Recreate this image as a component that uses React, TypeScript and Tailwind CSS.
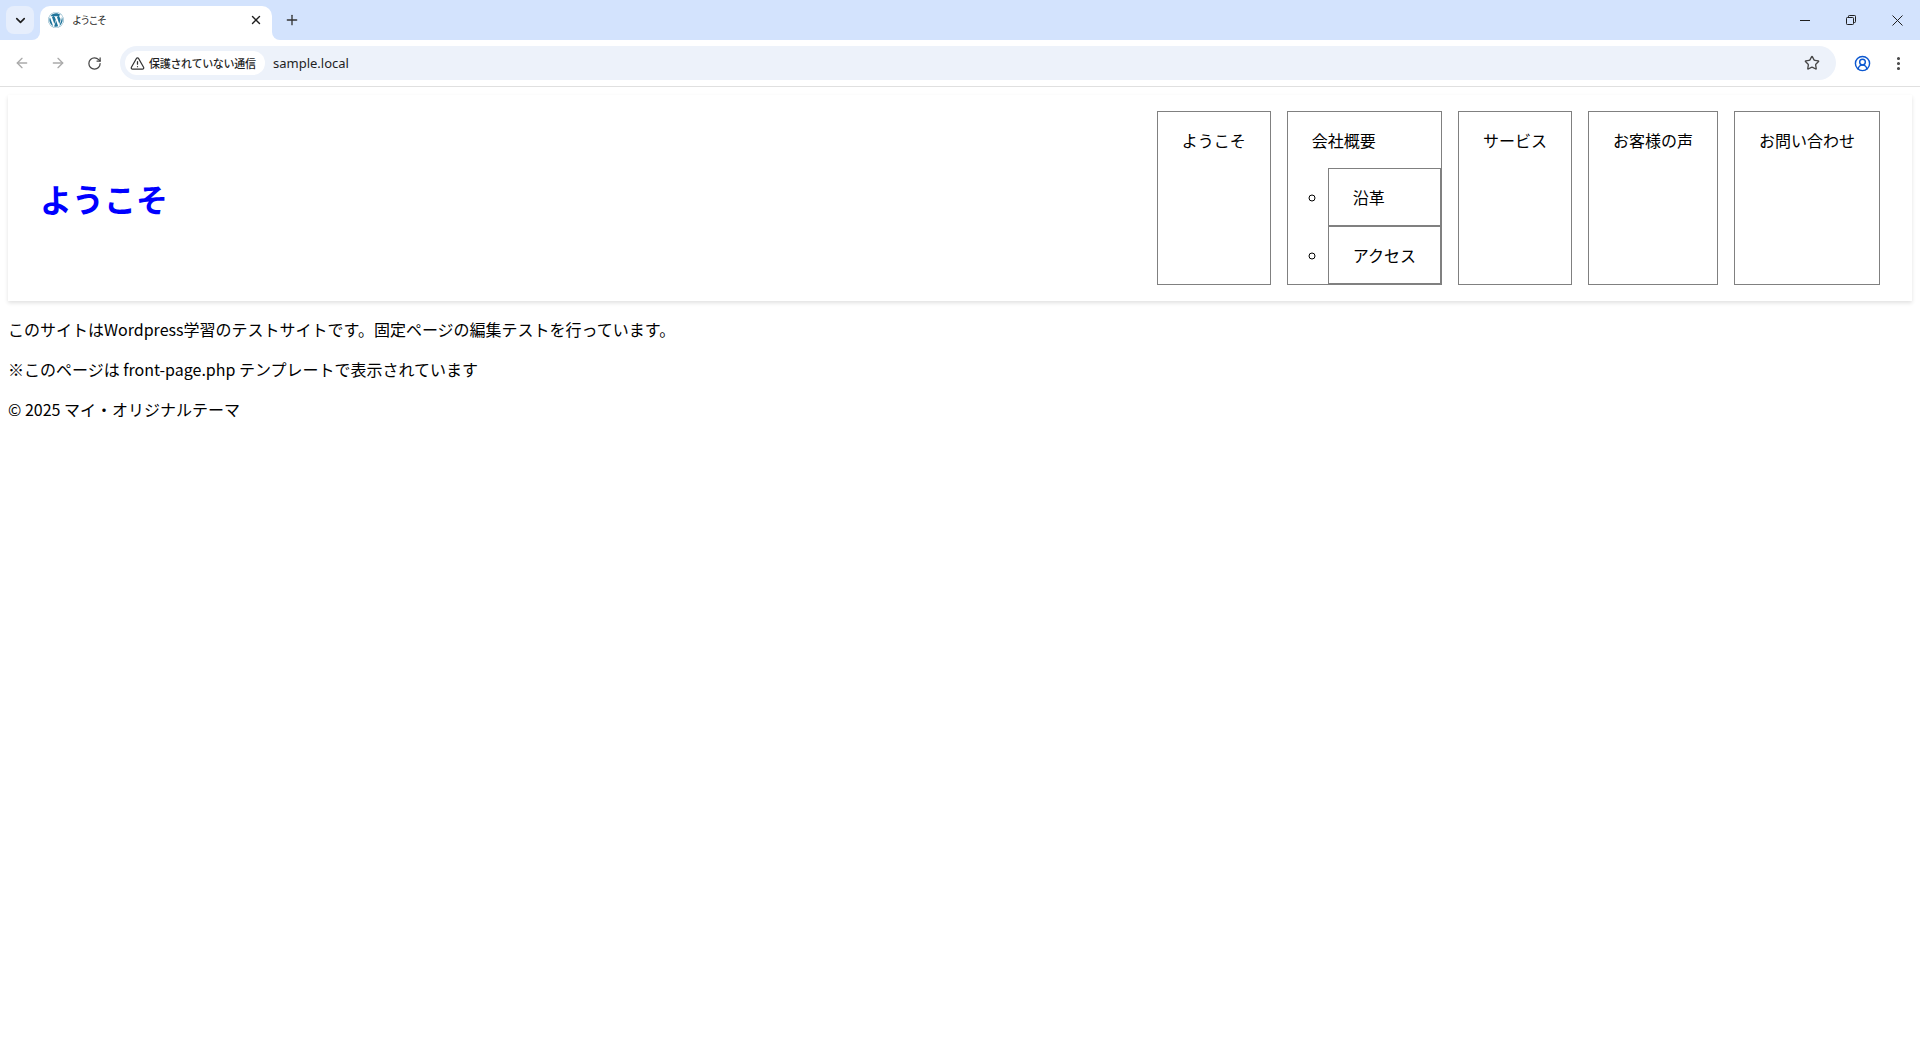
import { FaWordpress } from "react-icons/fa";
import { ArrowLeft, ArrowRight, RotateCw, Star, TriangleAlert, X, Plus, ChevronDown, CircleUserRound, EllipsisVertical } from "lucide-react";

function Chrome() {
  return (
    <div className="font-['Noto_Sans_CJK_JP','Noto_Sans',sans-serif] text-[#1f1f1f]">
      <div className="h-[40px] bg-[#d3e3fd] flex items-end pl-[6px] relative">
        <div className="w-[28px] h-[28px] mb-[6px] rounded-[8px] bg-[#e6eefc] flex items-center justify-center">
          <ChevronDown size={15} strokeWidth={2.6} />
        </div>
        <div className="relative ml-[6px] w-[232px] h-[34px] bg-white rounded-t-[10px] flex items-center pl-[8px] pr-[9px] pb-[6px]">
          <div className="absolute -left-[8px] bottom-0 w-[8px] h-[8px] bg-white">
            <div className="w-full h-full bg-[#d3e3fd] rounded-br-[8px]" />
          </div>
          <div className="absolute -right-[8px] bottom-0 w-[8px] h-[8px] bg-white">
            <div className="w-full h-full bg-[#d3e3fd] rounded-bl-[8px]" />
          </div>
          <FaWordpress size={16} className="text-[#21759b] shrink-0" />
          <span className="ml-[8px] text-[10px] tracking-[-1.7px] leading-none flex-1">ようこそ</span>
          <X size={14} strokeWidth={2.4} />
        </div>
        <div className="w-[28px] h-[28px] mb-[6px] ml-[6px] flex items-center justify-center">
          <Plus size={16} strokeWidth={2} className="text-[#333]" />
        </div>
        <div className="ml-auto flex items-center h-full">
          <div className="w-[46px] h-full flex items-center justify-center">
            <svg width="10" height="10" viewBox="0 0 10 10" fill="none" stroke="#1f1f1f" strokeWidth="1">
              <path d="M0 5.5H10" />
            </svg>
          </div>
          <div className="w-[46px] h-full flex items-center justify-center">
            <svg width="10" height="10" viewBox="0 0 10 10" fill="none" stroke="#1f1f1f" strokeWidth="1">
              <rect x="0.5" y="2.5" width="7" height="7" rx="0.8" />
              <path d="M2.5 2.5V1.3a.8.8 0 0 1 .8-.8h5.4a.8.8 0 0 1 .8.8v5.4a.8.8 0 0 1-.8.8H7.5" />
            </svg>
          </div>
          <div className="w-[46px] h-full flex items-center justify-center">
            <svg width="11" height="11" viewBox="0 0 11 11" fill="none" stroke="#1f1f1f" strokeWidth="1">
              <path d="M0.5 0.5L10.5 10.5M10.5 0.5L0.5 10.5" />
            </svg>
          </div>
        </div>
      </div>
      <div className="h-[47px] bg-white rounded-t-[8px] border-b border-[#e0e0e0] flex items-center pl-[8px] pr-[8px] relative">
        <div className="w-[28px] flex justify-center text-[#aaaaaa]"><ArrowLeft size={16} strokeWidth={2} /></div>
        <div className="w-[28px] ml-[8px] flex justify-center text-[#aaaaaa]"><ArrowRight size={16} strokeWidth={2} /></div>
        <div className="w-[28px] ml-[8px] flex justify-center text-[#474747]"><RotateCw size={15} strokeWidth={2} /></div>
        <div className="ml-[12px] h-[34px] flex-1 rounded-full bg-[#edf2fa] flex items-center pl-[5px] pr-[16px]">
          <div className="h-[24px] w-[140px] rounded-full bg-white flex items-center pl-[5px]">
            <TriangleAlert size={15} strokeWidth={2} className="text-[#333]" />
            <span className="ml-[4px] text-[11px] tracking-[-0.3px] leading-none font-medium whitespace-nowrap">保護されていない通信</span>
          </div>
          <span className="ml-[8px] pt-[1px] text-[13px] leading-none font-['Noto_Sans',sans-serif]">sample.local</span>
          <Star size={16} strokeWidth={2} className="ml-auto text-[#474747]" />
        </div>
        <div className="w-[32px] ml-[10px] flex justify-center text-[#0b57d0]"><CircleUserRound size={17} strokeWidth={2} /></div>
        <div className="w-[28px] ml-[6px] flex justify-center text-[#474747]"><EllipsisVertical size={17} strokeWidth={2.4} /></div>
      </div>
    </div>
  );
}

const boxClass = "border border-[#808080] px-6 py-4";

export default function App() {
  return (
    <div className="min-h-[1040px] bg-white text-black font-['Noto_Sans_CJK_JP','Noto_Sans',sans-serif] text-base leading-6">
      <Chrome />
      <div className="p-2">
        <header className="flex items-center justify-between px-8 py-4 bg-white shadow-[0_2px_4px_rgba(0,0,0,0.12)]">
          <h1 className="text-[32px] leading-[48px] font-bold text-[#0000ff]">ようこそ</h1>
          <nav>
            <ul className="flex gap-4">
              <li className={boxClass}>ようこそ</li>
              <li className="border border-[#808080]">
                <div className="px-6 py-4">会社概要</div>
                <ul className="pl-10 list-[circle] list-outside">
                  <li className={boxClass}>沿革</li>
                  <li className={boxClass}>アクセス</li>
                </ul>
              </li>
              <li className={boxClass}>サービス</li>
              <li className={boxClass}>お客様の声</li>
              <li className={boxClass}>お問い合わせ</li>
            </ul>
          </nav>
        </header>
        <main className="mt-4 flex flex-col gap-4">
          <p>このサイトはWordpress学習のテストサイトです。固定ページの編集テストを行っています。</p>
          <p>※このページは front-page.php テンプレートで表示されています</p>
          <p>© 2025 マイ・オリジナルテーマ</p>
        </main>
      </div>
    </div>
  );
}
